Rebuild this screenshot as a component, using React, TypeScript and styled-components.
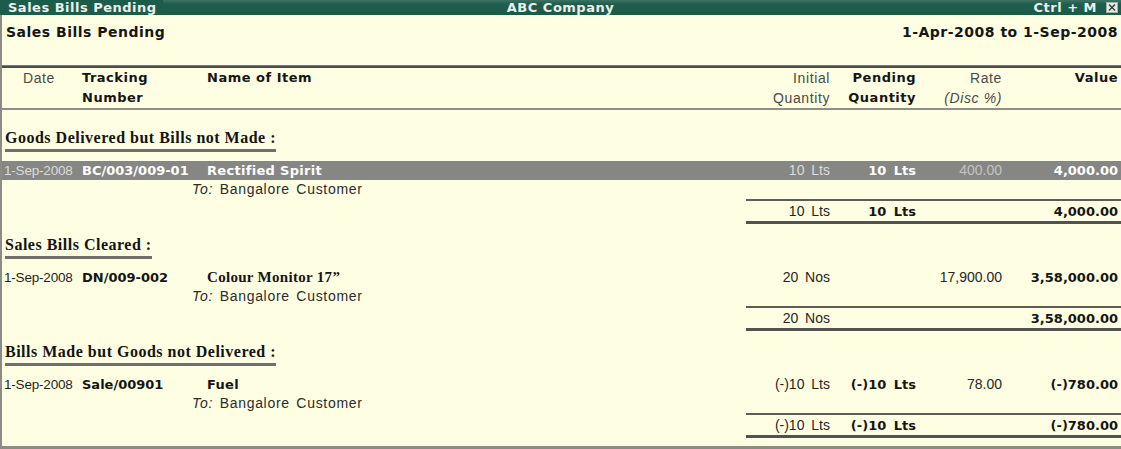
import React from "react";
import styled, { createGlobalStyle, css } from "styled-components";

const SANS_BOLD = `"DejaVu Sans", Verdana, sans-serif`;
const SANS = `"Liberation Sans", Arial, sans-serif`;
const SERIF = `"Liberation Serif", "Times New Roman", serif`;
const COLS = "80px 125px 1fr 84px 86px 86px 116px 3px";
const TOTAL_COLS = "84px 86px 86px 116px 3px";

const GlobalStyle = createGlobalStyle`
  html, body { margin: 0; padding: 0; background: #fefee2; }
  body { width: 1121px; height: 449px; overflow: hidden; font-family: ${SANS}; }
  * { box-sizing: border-box; }
`;

const Window = styled.div`
  width: 1121px;
  height: 449px;
  display: flex;
  flex-direction: column;
  background: #fefee2;
  overflow: hidden;
`;

const TitleBar = styled.div`
  height: 15px;
  flex: none;
  display: grid;
  grid-template-columns: 1fr auto 1fr;
  align-items: center;
  background: linear-gradient(#3f7264 0px, #1f5e4c 4px, #1b5a48 15px);
  color: #e8f1ec;
  font-family: ${SANS_BOLD};
  font-weight: bold;
  font-size: 13px;
  letter-spacing: 0.5px;
  line-height: 15px;
`;

const TitleLabel = styled.div`
  justify-self: start;
  padding: 0 6px 0 8px;
  background: #1c5c4a;
  height: 15px;
`;

const TitleCompany = styled.div`
  justify-self: center;
`;

const TitleKeys = styled.div`
  justify-self: end;
  display: flex;
  align-items: center;
  gap: 9px;
  padding-right: 3px;
`;

const CloseBox = styled.span`
  width: 12px;
  height: 11px;
  display: flex;
  align-items: center;
  justify-content: center;
  background: #e4eae4;
  border: 1px solid #9fb1a8;
`;

const Body = styled.div`
  flex: 1;
  display: flex;
  flex-direction: column;
  border-left: 2px solid #8c8c86;
  border-bottom: 3px solid #8c8c86;
`;

const ReportHead = styled.div`
  height: 50px;
  flex: none;
  display: flex;
  justify-content: space-between;
  padding: 8px 3px 0 4px;
  font-family: ${SANS_BOLD};
  font-weight: bold;
  font-size: 14px;
  letter-spacing: 0.5px;
  line-height: 18px;
  color: #161616;
`;

const HeavyRule = styled.div`
  height: 3px;
  flex: none;
  background: #4d4d4b;
  border-top: 1px solid #7a7a76;
`;

const Grid = styled.div`
  display: grid;
  grid-template-columns: ${COLS};
  align-items: center;
`;

const ColumnHeader = styled(Grid)`
  height: 42px;
  flex: none;
  align-items: start;
  border-bottom: 2px solid #8e8e8a;
`;

const HeadCell = styled.div<{ $align?: "left" | "right" | "center"; $bold?: boolean }>`
  text-align: ${(p) => p.$align ?? "left"};
  line-height: 20px;
  white-space: nowrap;
  ${(p) =>
    p.$bold
      ? css`
          font-family: ${SANS_BOLD};
          font-weight: bold;
          font-size: 13px;
          letter-spacing: 0.5px;
          color: #151515;
        `
      : css`
          font-family: ${SANS};
          font-size: 14px;
          letter-spacing: 0.6px;
          color: #4a4a4a;
        `}
  ${(p) => p.$align === "center" && "padding-right: 6px;"}
`;

const HeadSub = styled.span`
  font-style: italic;
`;

const Section = styled.section<{ $first?: boolean }>`
  display: flex;
  flex-direction: column;
  margin-top: ${(p) => (p.$first ? "19px" : "12px")};
`;

const SectionTitle = styled.h2`
  align-self: flex-start;
  margin: 0 0 9px 3px;
  padding-bottom: 2px;
  border-bottom: 3px solid #6f6f6c;
  font-family: ${SERIF};
  font-weight: bold;
  font-size: 16px;
  letter-spacing: 0.5px;
  line-height: 18px;
  color: #141414;
`;

const ItemRow = styled(Grid)<{ $highlight?: boolean }>`
  height: 19px;
  background: ${(p) => (p.$highlight ? "#868684" : "transparent")};
  color: ${(p) => (p.$highlight ? "#ffffff" : "#151515")};
`;

type CellKind = "date" | "bold" | "name" | "serif" | "regular";

const Cell = styled.span<{ $kind: CellKind; $right?: boolean; $light?: string }>`
  white-space: nowrap;
  line-height: 19px;
  text-align: ${(p) => (p.$right ? "right" : "left")};
  ${(p) => p.$light && `color: ${p.$light};`}
  ${(p) => {
    switch (p.$kind) {
      case "date":
        return css`
          font-family: ${SANS};
          font-size: 13.5px;
          letter-spacing: -0.2px;
          padding-left: 2px;
        `;
      case "bold":
        return css`
          font-family: ${SANS_BOLD};
          font-weight: bold;
          font-size: 13px;
          word-spacing: 3px;
        `;
      case "name":
        return css`
          font-family: ${SANS_BOLD};
          font-weight: bold;
          font-size: 13px;
          letter-spacing: 0.3px;
        `;
      case "serif":
        return css`
          font-family: ${SERIF};
          font-weight: bold;
          font-size: 15px;
          letter-spacing: 0.3px;
        `;
      default:
        return css`
          font-family: ${SANS};
          font-size: 14px;
          word-spacing: 3px;
        `;
    }
  }}
`;

const PartyRow = styled(Grid)`
  height: 19px;
`;

const Party = styled.span`
  grid-column: 2 / 4;
  padding-left: 110px;
  font-family: ${SANS};
  font-size: 14px;
  letter-spacing: 0.7px;
  word-spacing: 2px;
  color: #2c2c2c;
  line-height: 19px;
  white-space: nowrap;
`;

const PartyLabel = styled.span`
  font-style: italic;
`;

const TotalRow = styled(Grid)``;

const Totals = styled.div`
  grid-column: 4 / -1;
  display: grid;
  grid-template-columns: ${TOTAL_COLS};
  align-items: center;
  height: 25px;
  border-top: 2px solid #5c5c5a;
  border-bottom: 3px solid #525250;
  color: #151515;
`;

type Row = {
  date: string;
  code: string;
  item: string;
  serifItem?: boolean;
  initial: string;
  pending: string;
  rate: string;
  value: string;
  party: string;
  highlight?: boolean;
};

type SectionData = {
  title: string;
  rows: Row[];
  total: { initial: string; pending: string; value: string };
};

const sections: SectionData[] = [
  {
    title: "Goods Delivered but Bills not Made :",
    rows: [
      {
        date: "1-Sep-2008",
        code: "BC/003/009-01",
        item: "Rectified Spirit",
        initial: "10 Lts",
        pending: "10 Lts",
        rate: "400.00",
        value: "4,000.00",
        party: "Bangalore Customer",
        highlight: true,
      },
    ],
    total: { initial: "10 Lts", pending: "10 Lts", value: "4,000.00" },
  },
  {
    title: "Sales Bills Cleared :",
    rows: [
      {
        date: "1-Sep-2008",
        code: "DN/009-002",
        item: "Colour Monitor 17\u201D",
        serifItem: true,
        initial: "20 Nos",
        pending: "",
        rate: "17,900.00",
        value: "3,58,000.00",
        party: "Bangalore Customer",
      },
    ],
    total: { initial: "20 Nos", pending: "", value: "3,58,000.00" },
  },
  {
    title: "Bills Made but Goods not Delivered :",
    rows: [
      {
        date: "1-Sep-2008",
        code: "Sale/00901",
        item: "Fuel",
        initial: "(-)10 Lts",
        pending: "(-)10 Lts",
        rate: "78.00",
        value: "(-)780.00",
        party: "Bangalore Customer",
      },
    ],
    total: { initial: "(-)10 Lts", pending: "(-)10 Lts", value: "(-)780.00" },
  },
];

const CloseIcon = () => (
  <svg width="8" height="7" viewBox="0 0 8 7">
    <path d="M1 0.5 L7 6.5 M7 0.5 L1 6.5" stroke="#2a3a33" strokeWidth="1.3" />
  </svg>
);

export default function App() {
  return (
    <>
      <GlobalStyle />
      <Window>
        <TitleBar>
          <TitleLabel>Sales Bills Pending</TitleLabel>
          <TitleCompany>ABC Company</TitleCompany>
          <TitleKeys>
            <span>Ctrl + M</span>
            <CloseBox>
              <CloseIcon />
            </CloseBox>
          </TitleKeys>
        </TitleBar>
        <Body>
          <ReportHead>
            <span>Sales Bills Pending</span>
            <span>1-Apr-2008 to 1-Sep-2008</span>
          </ReportHead>
          <HeavyRule />
          <ColumnHeader>
            <HeadCell $align="center">Date</HeadCell>
            <HeadCell $bold>
              Tracking
              <br />
              Number
            </HeadCell>
            <HeadCell $bold>Name of Item</HeadCell>
            <HeadCell $align="right">
              Initial
              <br />
              Quantity
            </HeadCell>
            <HeadCell $align="right" $bold>
              Pending
              <br />
              Quantity
            </HeadCell>
            <HeadCell $align="right">
              Rate
              <br />
              <HeadSub>(Disc %)</HeadSub>
            </HeadCell>
            <HeadCell $align="right" $bold>
              Value
            </HeadCell>
            <span />
          </ColumnHeader>
          {sections.map((s, i) => (
            <Section key={s.title} $first={i === 0}>
              <SectionTitle>{s.title}</SectionTitle>
              {s.rows.map((r) => (
                <React.Fragment key={r.code}>
                  <ItemRow $highlight={r.highlight}>
                    <Cell $kind="date" $light={r.highlight ? "#dcdcda" : "#1e1e1e"}>
                      {r.date}
                    </Cell>
                    <Cell $kind="bold">{r.code}</Cell>
                    <Cell $kind={r.serifItem ? "serif" : "name"}>{r.item}</Cell>
                    <Cell $kind="regular" $right $light={r.highlight ? "#dcdcda" : "#262626"}>
                      {r.initial}
                    </Cell>
                    <Cell $kind="bold" $right>
                      {r.pending}
                    </Cell>
                    <Cell $kind="regular" $right $light={r.highlight ? "#c4c4c2" : "#262626"}>
                      {r.rate}
                    </Cell>
                    <Cell $kind="bold" $right>
                      {r.value}
                    </Cell>
                    <span />
                  </ItemRow>
                  <PartyRow>
                    <Party>
                      <PartyLabel>To:</PartyLabel> {r.party}
                    </Party>
                  </PartyRow>
                </React.Fragment>
              ))}
              <TotalRow>
                <Totals>
                  <Cell $kind="regular" $right $light="#262626">
                    {s.total.initial}
                  </Cell>
                  <Cell $kind="bold" $right>
                    {s.total.pending}
                  </Cell>
                  <span />
                  <Cell $kind="bold" $right>
                    {s.total.value}
                  </Cell>
                  <span />
                </Totals>
              </TotalRow>
            </Section>
          ))}
        </Body>
      </Window>
    </>
  );
}
